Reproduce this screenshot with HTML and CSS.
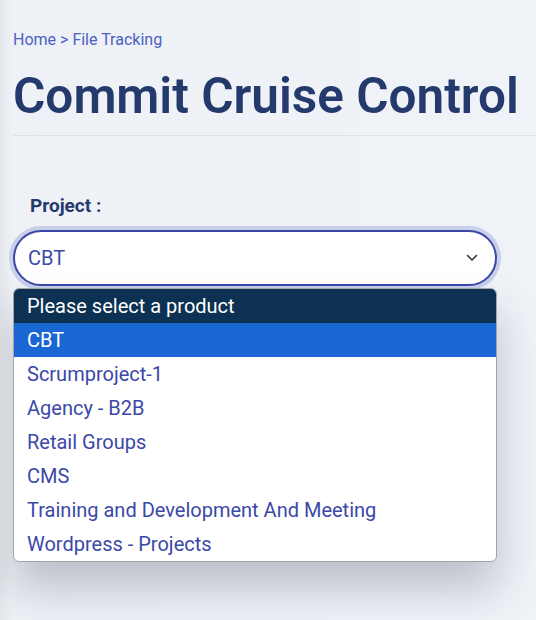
FILE: index.html
```html
<!DOCTYPE html>
<html lang="en">
<head>
<meta charset="utf-8">
<title>Commit Cruise Control</title>
<link rel="stylesheet" href="styles.css">
</head>
<body>
<main class="page">
  <nav class="breadcrumb"><a href="#">Home</a> &gt; <a href="#">File Tracking</a></nav>
  <h1 class="title">Commit Cruise Control</h1>
  <hr class="rule">
  <section class="field">
    <label class="label">Project :</label>
    <div class="select">
      <span class="select-value">CBT</span>
      <svg class="chevron" width="12" height="8" viewBox="0 0 12 8"><path d="M1.5 1.5 L6 6 L10.5 1.5" fill="none" stroke="#333" stroke-width="1.6" stroke-linecap="round" stroke-linejoin="round"/></svg>
    </div>
    <ul class="options">
      <li class="option option-header">Please select a product</li>
      <li class="option option-active">CBT</li>
      <li class="option">Scrumproject-1</li>
      <li class="option">Agency - B2B</li>
      <li class="option">Retail Groups</li>
      <li class="option">CMS</li>
      <li class="option">Training and Development And Meeting</li>
      <li class="option">Wordpress - Projects</li>
    </ul>
  </section>
</main>
</body>
</html>
```
FILE: styles.css
```css
html, body {
  margin: 0;
  height: 100%;
}
body {
  background: linear-gradient(to right, #e3e6ea 0px, #eef1f6 12px, #eff2f7 100%);
  font-family: Roboto, "Liberation Sans", sans-serif;
  overflow: hidden;
}
.page {
  padding: 30px 0 0 13px;
}
.breadcrumb {
  font-size: 16px;
  line-height: 20px;
  color: #4a62c4;
}
.breadcrumb a {
  color: #4a62c4;
  text-decoration: none;
}
.title {
  margin: 18px 0 0;
  font-size: 49.5px;
  line-height: 57px;
  font-weight: 600;
  color: #243a6d;
  white-space: nowrap;
}
.rule {
  margin: 10px 0 0;
  border: 0;
  border-top: 1px solid #dde1e8;
}
.field {
  padding-top: 59px;
  width: 484px;
}
.label {
  display: block;
  padding-left: 17px;
  font-size: 19px;
  font-weight: 700;
  color: #243a6d;
  line-height: 22px;
}
.select {
  margin-top: 13px;
  height: 56px;
  box-sizing: border-box;
  border: 2px solid #3b48a8;
  border-radius: 28px;
  background: #fff;
  box-shadow: 0 0 0 4px #c7cfea;
  display: flex;
  align-items: center;
  justify-content: space-between;
  padding: 0 17px 0 13px;
}
.select-value {
  font-size: 20px;
  color: #3b48a8;
}
.options {
  list-style: none;
  margin: 2px 0 0;
  padding: 0;
  background: #fff;
  border: 1px solid #a3a5a8;
  border-radius: 6px;
  overflow: hidden;
  box-shadow: 0 26px 44px rgba(40,50,70,0.26);
}
.option {
  height: 34px;
  line-height: 34px;
  padding-left: 13px;
  font-size: 20px;
  color: #3b48a8;
}
.option-header {
  background: #0d3152;
  color: #fff;
}
.option-active {
  background: #1a67d3;
  color: #fff;
}
```
